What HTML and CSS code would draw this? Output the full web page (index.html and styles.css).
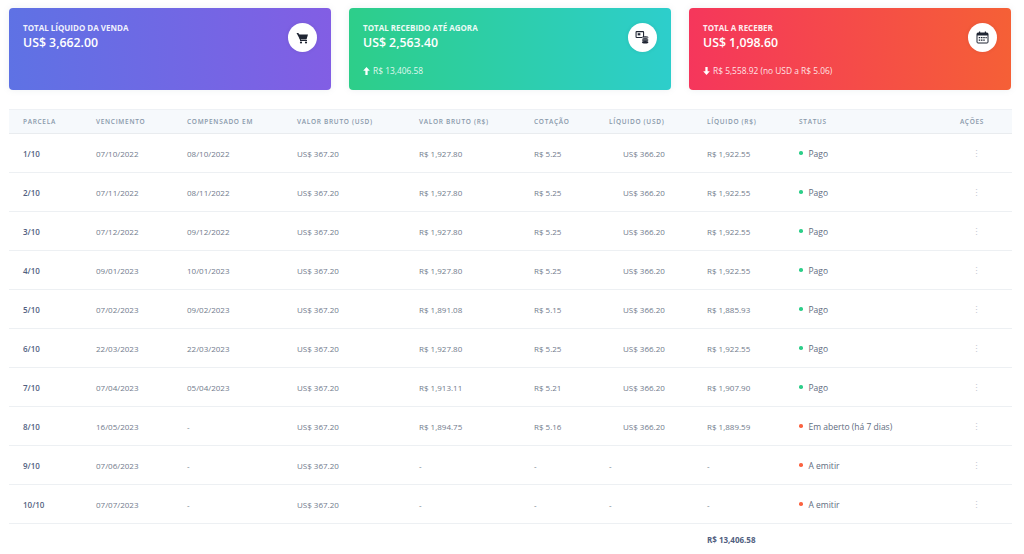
FILE: index.html
```html
<!DOCTYPE html>
<html lang="pt-BR">
<head>
<meta charset="utf-8">
<title>Parcelas</title>
<link rel="stylesheet" href="styles.css">
</head>
<body>
<div class="cards">
  <div class="card card-primary">
    <div class="card-body">
      <div class="card-title">TOTAL LÍQUIDO DA VENDA</div>
      <div class="card-value">US$ 3,662.00</div>
    </div>
    <div class="icon-circle">
      <svg width="13" height="12" viewBox="0 0 26 24"><path d="M1 2h4l1 3h18l-3 10H8z" fill="#1f2533"/><path d="M6 5l3 11" stroke="#1f2533" stroke-width="2" fill="none"/><rect x="8" y="16" width="14" height="2" fill="#1f2533"/><circle cx="10" cy="21" r="2.2" fill="#1f2533"/><circle cx="20" cy="21" r="2.2" fill="#1f2533"/></svg>
    </div>
  </div>
  <div class="card card-success">
    <div class="card-body">
      <div class="card-title">TOTAL RECEBIDO ATÉ AGORA</div>
      <div class="card-value">US$ 2,563.40</div>
      <div class="card-sub"><svg class="arr" width="7" height="8" viewBox="0 0 10 12"><path d="M5 0L0 5.5h3.3V12h3.4V5.5H10z" fill="#fff"/></svg>R$ 13,406.58</div>
    </div>
    <div class="icon-circle">
      <svg width="15" height="15" viewBox="0 0 28 28"><rect x="2" y="3" width="14" height="11" rx="1" fill="none" stroke="#1f2533" stroke-width="2"/><rect x="5" y="6" width="5" height="4" fill="#1f2533"/><ellipse cx="19" cy="14" rx="6" ry="2.4" fill="#1f2533"/><ellipse cx="19" cy="18.5" rx="6" ry="2.4" fill="#1f2533"/><ellipse cx="19" cy="23" rx="6" ry="2.4" fill="#1f2533"/><path d="M13 14h12M13 18.5h12" stroke="#fff" stroke-width="0.8"/></svg>
    </div>
  </div>
  <div class="card card-danger">
    <div class="card-body">
      <div class="card-title">TOTAL A RECEBER</div>
      <div class="card-value">US$ 1,098.60</div>
      <div class="card-sub"><svg class="arr" width="7" height="8" viewBox="0 0 10 12"><path d="M5 12L0 6.5h3.3V0h3.4v6.5H10z" fill="#fff"/></svg>R$ 5,558.92 (no USD a R$ 5.06)</div>
    </div>
    <div class="icon-circle">
      <svg width="13" height="13" viewBox="0 0 26 26"><rect x="2" y="4" width="22" height="20" rx="2" fill="none" stroke="#1f2533" stroke-width="2"/><rect x="2" y="4" width="22" height="5" fill="#1f2533"/><rect x="6" y="1" width="2.4" height="5" fill="#1f2533"/><rect x="17.6" y="1" width="2.4" height="5" fill="#1f2533"/><g fill="#1f2533"><rect x="5.5" y="12" width="3" height="2.5"/><rect x="10" y="12" width="3" height="2.5"/><rect x="14.5" y="12" width="3" height="2.5"/><rect x="19" y="12" width="2.5" height="2.5"/><rect x="5.5" y="17" width="3" height="2.5"/><rect x="10" y="17" width="3" height="2.5"/><rect x="14.5" y="17" width="3" height="2.5"/></g></svg>
    </div>
  </div>
</div>

<table class="parcelas">
  <colgroup>
    <col class="c1"><col class="c2"><col class="c3"><col class="c4"><col class="c5"><col class="c6"><col class="c7"><col class="c8"><col class="c9"><col class="c10">
  </colgroup>
  <thead>
    <tr>
      <th>PARCELA</th><th>VENCIMENTO</th><th>COMPENSADO EM</th><th>VALOR BRUTO (USD)</th><th>VALOR BRUTO (R$)</th><th>COTAÇÃO</th><th>LÍQUIDO (USD)</th><th>LÍQUIDO (R$)</th><th>STATUS</th><th class="acoes">AÇÕES</th>
    </tr>
  </thead>
  <tbody>
    <tr><td class="parc">1/10</td><td>07/10/2022</td><td>08/10/2022</td><td>US$ 367.20</td><td>R$ 1,927.80</td><td>R$ 5.25</td><td><span class="liq">US$ 366.20</span></td><td>R$ 1,922.55</td><td class="status"><span class="dot ok"></span>Pago</td><td class="acoes"><span class="more">⋮</span></td></tr>
    <tr><td class="parc">2/10</td><td>07/11/2022</td><td>08/11/2022</td><td>US$ 367.20</td><td>R$ 1,927.80</td><td>R$ 5.25</td><td><span class="liq">US$ 366.20</span></td><td>R$ 1,922.55</td><td class="status"><span class="dot ok"></span>Pago</td><td class="acoes"><span class="more">⋮</span></td></tr>
    <tr><td class="parc">3/10</td><td>07/12/2022</td><td>09/12/2022</td><td>US$ 367.20</td><td>R$ 1,927.80</td><td>R$ 5.25</td><td><span class="liq">US$ 366.20</span></td><td>R$ 1,922.55</td><td class="status"><span class="dot ok"></span>Pago</td><td class="acoes"><span class="more">⋮</span></td></tr>
    <tr><td class="parc">4/10</td><td>09/01/2023</td><td>10/01/2023</td><td>US$ 367.20</td><td>R$ 1,927.80</td><td>R$ 5.25</td><td><span class="liq">US$ 366.20</span></td><td>R$ 1,922.55</td><td class="status"><span class="dot ok"></span>Pago</td><td class="acoes"><span class="more">⋮</span></td></tr>
    <tr><td class="parc">5/10</td><td>07/02/2023</td><td>09/02/2023</td><td>US$ 367.20</td><td>R$ 1,891.08</td><td>R$ 5.15</td><td><span class="liq">US$ 366.20</span></td><td>R$ 1,885.93</td><td class="status"><span class="dot ok"></span>Pago</td><td class="acoes"><span class="more">⋮</span></td></tr>
    <tr><td class="parc">6/10</td><td>22/03/2023</td><td>22/03/2023</td><td>US$ 367.20</td><td>R$ 1,927.80</td><td>R$ 5.25</td><td><span class="liq">US$ 366.20</span></td><td>R$ 1,922.55</td><td class="status"><span class="dot ok"></span>Pago</td><td class="acoes"><span class="more">⋮</span></td></tr>
    <tr><td class="parc">7/10</td><td>07/04/2023</td><td>05/04/2023</td><td>US$ 367.20</td><td>R$ 1,913.11</td><td>R$ 5.21</td><td><span class="liq">US$ 366.20</span></td><td>R$ 1,907.90</td><td class="status"><span class="dot ok"></span>Pago</td><td class="acoes"><span class="more">⋮</span></td></tr>
    <tr><td class="parc">8/10</td><td>16/05/2023</td><td>-</td><td>US$ 367.20</td><td>R$ 1,894.75</td><td>R$ 5.16</td><td><span class="liq">US$ 366.20</span></td><td>R$ 1,889.59</td><td class="status"><span class="dot warn"></span>Em aberto (há 7 dias)</td><td class="acoes"><span class="more">⋮</span></td></tr>
    <tr><td class="parc">9/10</td><td>07/06/2023</td><td>-</td><td>US$ 367.20</td><td>-</td><td>-</td><td>-</td><td>-</td><td class="status"><span class="dot warn"></span>A emitir</td><td class="acoes"><span class="more">⋮</span></td></tr>
    <tr><td class="parc">10/10</td><td>07/07/2023</td><td>-</td><td>US$ 367.20</td><td>-</td><td>-</td><td>-</td><td>-</td><td class="status"><span class="dot warn"></span>A emitir</td><td class="acoes"><span class="more">⋮</span></td></tr>
  </tbody>
  <tfoot>
    <tr><td colspan="7"></td><td class="total">R$ 13,406.58</td><td colspan="2"></td></tr>
  </tfoot>
</table>
</body>
</html>
```

FILE: styles.css
```css
* { box-sizing: border-box; }

html, body {
  margin: 0;
  background: #ffffff;
}

body {
  padding: 8px 12px 0 9px;
  font-family: "Open Sans", "Liberation Sans", sans-serif;
  color: #525f7f;
  overflow: hidden;
}

.cards {
  display: flex;
  gap: 18px;
}

.card {
  width: 322px;
  height: 82px;
  border-radius: 4px;
  display: flex;
  justify-content: space-between;
  padding: 14px 14px 0 14px;
  color: #fff;
  box-shadow: 0 0 6px rgba(136, 152, 170, 0.15);
}

.card-primary { background: linear-gradient(87deg, #5e72e4 0, #825ee4 100%); }
.card-success { background: linear-gradient(87deg, #2dce89 0, #2dcecc 100%); }
.card-danger  { background: linear-gradient(87deg, #f5365c 0, #f56036 100%); }

.card-body {
  display: flex;
  flex-direction: column;
}

.card-title {
  font-size: 8px;
  font-weight: 700;
  line-height: 11px;
  color: rgba(255,255,255,0.92);
}

.card-value {
  font-size: 12.3px;
  font-weight: 600;
  line-height: 16px;
  margin-top: 2px;
}

.card-sub {
  font-size: 8.4px;
  line-height: 11px;
  margin-top: 14px;
  color: rgba(255,255,255,0.88);
  display: flex;
  align-items: center;
}

.arr { margin-right: 3px; }

.icon-circle {
  width: 29px;
  height: 29px;
  border-radius: 50%;
  background: #fff;
  display: flex;
  align-items: center;
  justify-content: center;
  margin-top: 1px;
  box-shadow: 0 0 4px rgba(0,0,0,0.08);
}

.parcelas {
  margin-top: 19px;
  width: 1003px;
  border-collapse: collapse;
  table-layout: fixed;
  font-size: 8px;
}

.c1 { width: 73px; }
.c2 { width: 91px; }
.c3 { width: 110px; }
.c4 { width: 122px; }
.c5 { width: 115px; }
.c6 { width: 75px; }
.c7 { width: 98px; }
.c8 { width: 92px; }
.c9 { width: 147px; }
.c10 { width: 80px; }

.parcelas th {
  background: #f6f9fc;
  color: #8898aa;
  font-size: 6.5px;
  font-weight: 600;
  letter-spacing: 0.7px;
  text-align: left;
  height: 24px;
  padding: 0 0 0 14px;
  border-top: 1px solid #eef1f5;
  border-bottom: 1px solid #e9ecef;
}

.parcelas td {
  height: 39px;
  padding: 0 0 0 14px;
  color: #717b8c;
  border-bottom: 1px solid #edf0f3;
  white-space: nowrap;
}

.parcelas td.parc {
  color: #525f7f;
  font-weight: 600;
}

.parcelas td.status {
  font-size: 8.5px;
  color: #616c80;
}

.parcelas .acoes {
  text-align: center;
  padding: 0;
}

.more {
  display: inline-block;
  margin-left: 9px;
  color: #c5cbd3;
  font-size: 9px;
}

.liq { margin-left: 14px; }

.dot {
  display: inline-block;
  width: 3.5px;
  height: 3.5px;
  border-radius: 50%;
  margin-right: 6px;
  vertical-align: middle;
  position: relative;
  top: -1px;
}

.dot.ok { background: #2dce89; }
.dot.warn { background: #fb6340; }

.parcelas tfoot td {
  border-bottom: none;
  height: 31px;
}

.parcelas tfoot td.total {
  font-weight: 700;
  color: #525f7f;
}
```
